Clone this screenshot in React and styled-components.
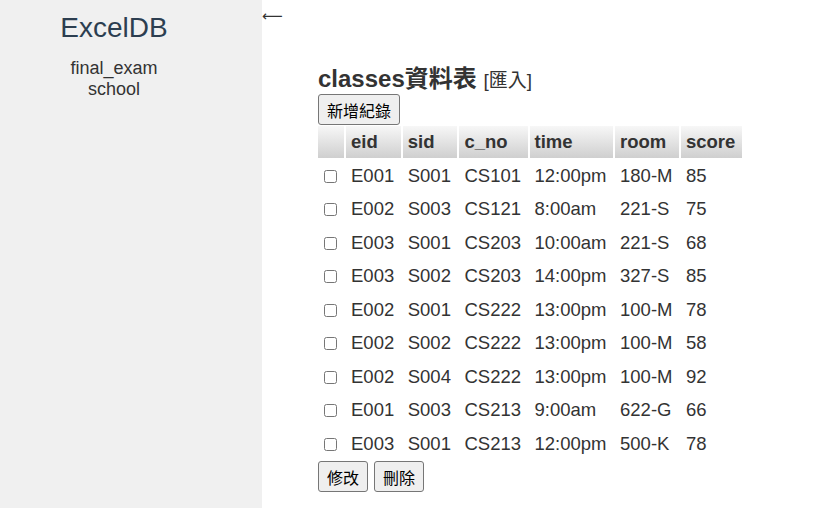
import React from "react";
import styled, { createGlobalStyle } from "styled-components";

const rows = [
  ["E001", "S001", "CS101", "12:00pm", "180-M", "85"],
  ["E002", "S003", "CS121", "8:00am", "221-S", "75"],
  ["E003", "S001", "CS203", "10:00am", "221-S", "68"],
  ["E003", "S002", "CS203", "14:00pm", "327-S", "85"],
  ["E002", "S001", "CS222", "13:00pm", "100-M", "78"],
  ["E002", "S002", "CS222", "13:00pm", "100-M", "58"],
  ["E002", "S004", "CS222", "13:00pm", "100-M", "92"],
  ["E001", "S003", "CS213", "9:00am", "622-G", "66"],
  ["E003", "S001", "CS213", "12:00pm", "500-K", "78"],
];

const columns = ["eid", "sid", "c_no", "time", "room", "score"];

const App = () => {
  return (
    <>
      <GlobalStyle />
      <Page>
        <Sidebar>
          <Brand>ExcelDB</Brand>
          <DbName>final_exam</DbName>
          <DbName>school</DbName>
        </Sidebar>
        <Main>
          <BackArrow>⟵</BackArrow>
          <Content>
            <Title>
              classes資料表 <ImportLink>[匯入]</ImportLink>
            </Title>
            <Button>新增紀錄</Button>
            <Table>
              <thead>
                <tr>
                  <Th />
                  {columns.map((c) => (
                    <Th key={c}>{c}</Th>
                  ))}
                </tr>
              </thead>
              <tbody>
                {rows.map((r, i) => (
                  <tr key={i}>
                    <CheckCell>
                      <input type="checkbox" />
                    </CheckCell>
                    {r.map((v, j) => (
                      <Td key={j}>{v}</Td>
                    ))}
                  </tr>
                ))}
              </tbody>
            </Table>
            <Actions>
              <Button>修改</Button>
              <Button>刪除</Button>
            </Actions>
          </Content>
        </Main>
      </Page>
    </>
  );
};

export default App;

const GlobalStyle = createGlobalStyle`
  body {
    margin: 0;
    font-family: "Liberation Sans", Arial, "Noto Sans CJK TC", sans-serif;
    color: #333;
    background: #fff;
  }
`;

const Page = styled.div`
  display: flex;
  height: 508px;
`;

const Sidebar = styled.div`
  width: 228px;
  padding: 12px 34px 0 0;
  background: #f0f0f0;
  text-align: center;
  flex-shrink: 0;
`;

const Brand = styled.div`
  font-size: 28px;
  line-height: 32px;
  color: #2c3e50;
  margin-bottom: 14px;
`;

const DbName = styled.div`
  font-size: 18px;
  line-height: 21px;
  color: #333;
`;

const Main = styled.div`
  flex: 1;
  display: flex;
  flex-direction: column;
`;

const BackArrow = styled.div`
  font-family: "DejaVu Sans", sans-serif;
  font-size: 14.5px;
  line-height: 20px;
  padding-top: 6px;
  color: #333;
`;

const Content = styled.div`
  padding-left: 56px;
  display: flex;
  flex-direction: column;
  align-items: flex-start;
`;

const Title = styled.h2`
  margin: 39px 0 0;
  font-size: 24px;
  line-height: 27px;
  font-weight: bold;
  color: #333;
`;

const ImportLink = styled.span`
  font-size: 19px;
  font-weight: normal;
`;

const Button = styled.button`
  height: 31px;
  padding: 0 8px;
  border: 1px solid #767676;
  border-radius: 3px;
  background: #efefef;
  font-family: "Noto Sans CJK TC", sans-serif;
  font-size: 16px;
  color: #000;
`;

const Table = styled.table`
  border-spacing: 2px;
  margin: -1px 0 0 -2px;
  font-size: 18.5px;
  color: #333;
`;

const Th = styled.th`
  padding: 5px 6.5px 5px 5px;
  line-height: 21.5px;
  text-align: left;
  font-weight: bold;
  background: linear-gradient(#f7f7f7, #cfcfcf);
`;

const Td = styled.td`
  padding: 5px 6.5px 5px 5px;
  line-height: 21.5px;
  white-space: nowrap;
`;

const CheckCell = styled.td`
  padding: 0 3px 0 2px;
  input {
    margin: 3px 4px;
    vertical-align: middle;
  }
`;

const Actions = styled.div`
  display: flex;
  gap: 6px;
`;
